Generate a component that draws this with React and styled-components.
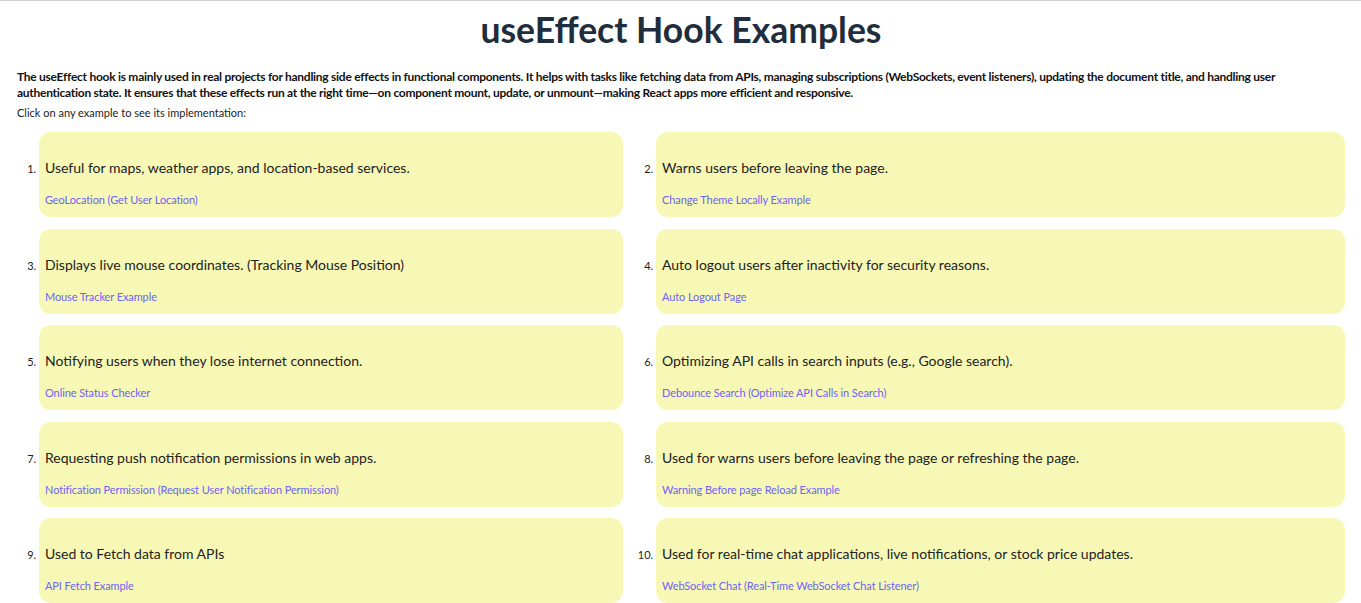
import React from "react";
import styled, { createGlobalStyle } from "styled-components";

const GlobalStyle = createGlobalStyle`
  html, body {
    margin: 0;
    padding: 0;
    background: #ffffff;
  }
  body {
    font-family: Lato, "Open Sans", sans-serif;
    border-top: 1px solid #d3d3d3;
  }
`;

const Page = styled.div`
  padding: 0 16px 0 17px;
`;

const Title = styled.h1`
  margin: 0;
  padding-top: 9px;
  height: 47px;
  text-align: center;
  font-size: 35.5px;
  font-weight: 700;
  line-height: 40px;
  color: #1f2d3d;
`;

const Intro = styled.p`
  margin: 12px 0 0;
  font-size: 12px;
  font-weight: 700;
  letter-spacing: -0.27px;
  line-height: 16px;
  color: #111;
`;

const Hint = styled.p`
  margin: 4px 0 0;
  font-size: 11px;
  line-height: 16px;
  color: #222;
`;

const List = styled.ol`
  margin: 11px 0 0;
  padding: 0 0 0 22px;
  display: grid;
  grid-template-columns: minmax(0, 584fr) minmax(0, 689fr);
  column-gap: 33px;
  row-gap: 11.5px;
`;

const Card = styled.li`
  height: 85px;
  box-sizing: border-box;
  padding: 26px 6px 9px;
  background: #f8f8b6;
  border-radius: 12px;
  font-size: 11px;
  color: #222;
  cursor: pointer;

  &::marker {
    color: #222;
  }
`;

const Text = styled.div`
  font-size: 14px;
  line-height: 20px;
  color: #222;
`;

const Link = styled.a`
  display: block;
  margin-top: 14px;
  font-size: 11px;
  line-height: 16px;
  letter-spacing: -0.1px;
  color: #6d63f5;
  text-decoration: none;
`;

const examples = [
  ["Useful for maps, weather apps, and location-based services.", "GeoLocation (Get User Location)"],
  ["Warns users before leaving the page.", "Change Theme Locally Example"],
  ["Displays live mouse coordinates. (Tracking Mouse Position)", "Mouse Tracker Example"],
  ["Auto logout users after inactivity for security reasons.", "Auto Logout Page"],
  ["Notifying users when they lose internet connection.", "Online Status Checker"],
  ["Optimizing API calls in search inputs (e.g., Google search).", "Debounce Search (Optimize API Calls in Search)"],
  ["Requesting push notification permissions in web apps.", "Notification Permission (Request User Notification Permission)"],
  ["Used for warns users before leaving the page or refreshing the page.", "Warning Before page Reload Example"],
  ["Used to Fetch data from APIs", "API Fetch Example"],
  ["Used for real-time chat applications, live notifications, or stock price updates.", "WebSocket Chat (Real-Time WebSocket Chat Listener)"],
];

export default function App() {
  return (
    <>
      <GlobalStyle />
      <Page>
        <Title>useEffect Hook Examples</Title>
        <Intro>
          The useEffect hook is mainly used in real projects for handling side effects in functional components. It helps with tasks like fetching data from APIs, managing subscriptions (WebSockets, event listeners), updating the document title, and handling user authentication state. It ensures that these effects run at the right time—on component mount, update, or unmount—making React apps more efficient and responsive.
        </Intro>
        <Hint>Click on any example to see its implementation:</Hint>
        <List>
          {examples.map(([text, link]) => (
            <Card key={link}>
              <Text>{text}</Text>
              <Link href="#">{link}</Link>
            </Card>
          ))}
        </List>
      </Page>
    </>
  );
}
